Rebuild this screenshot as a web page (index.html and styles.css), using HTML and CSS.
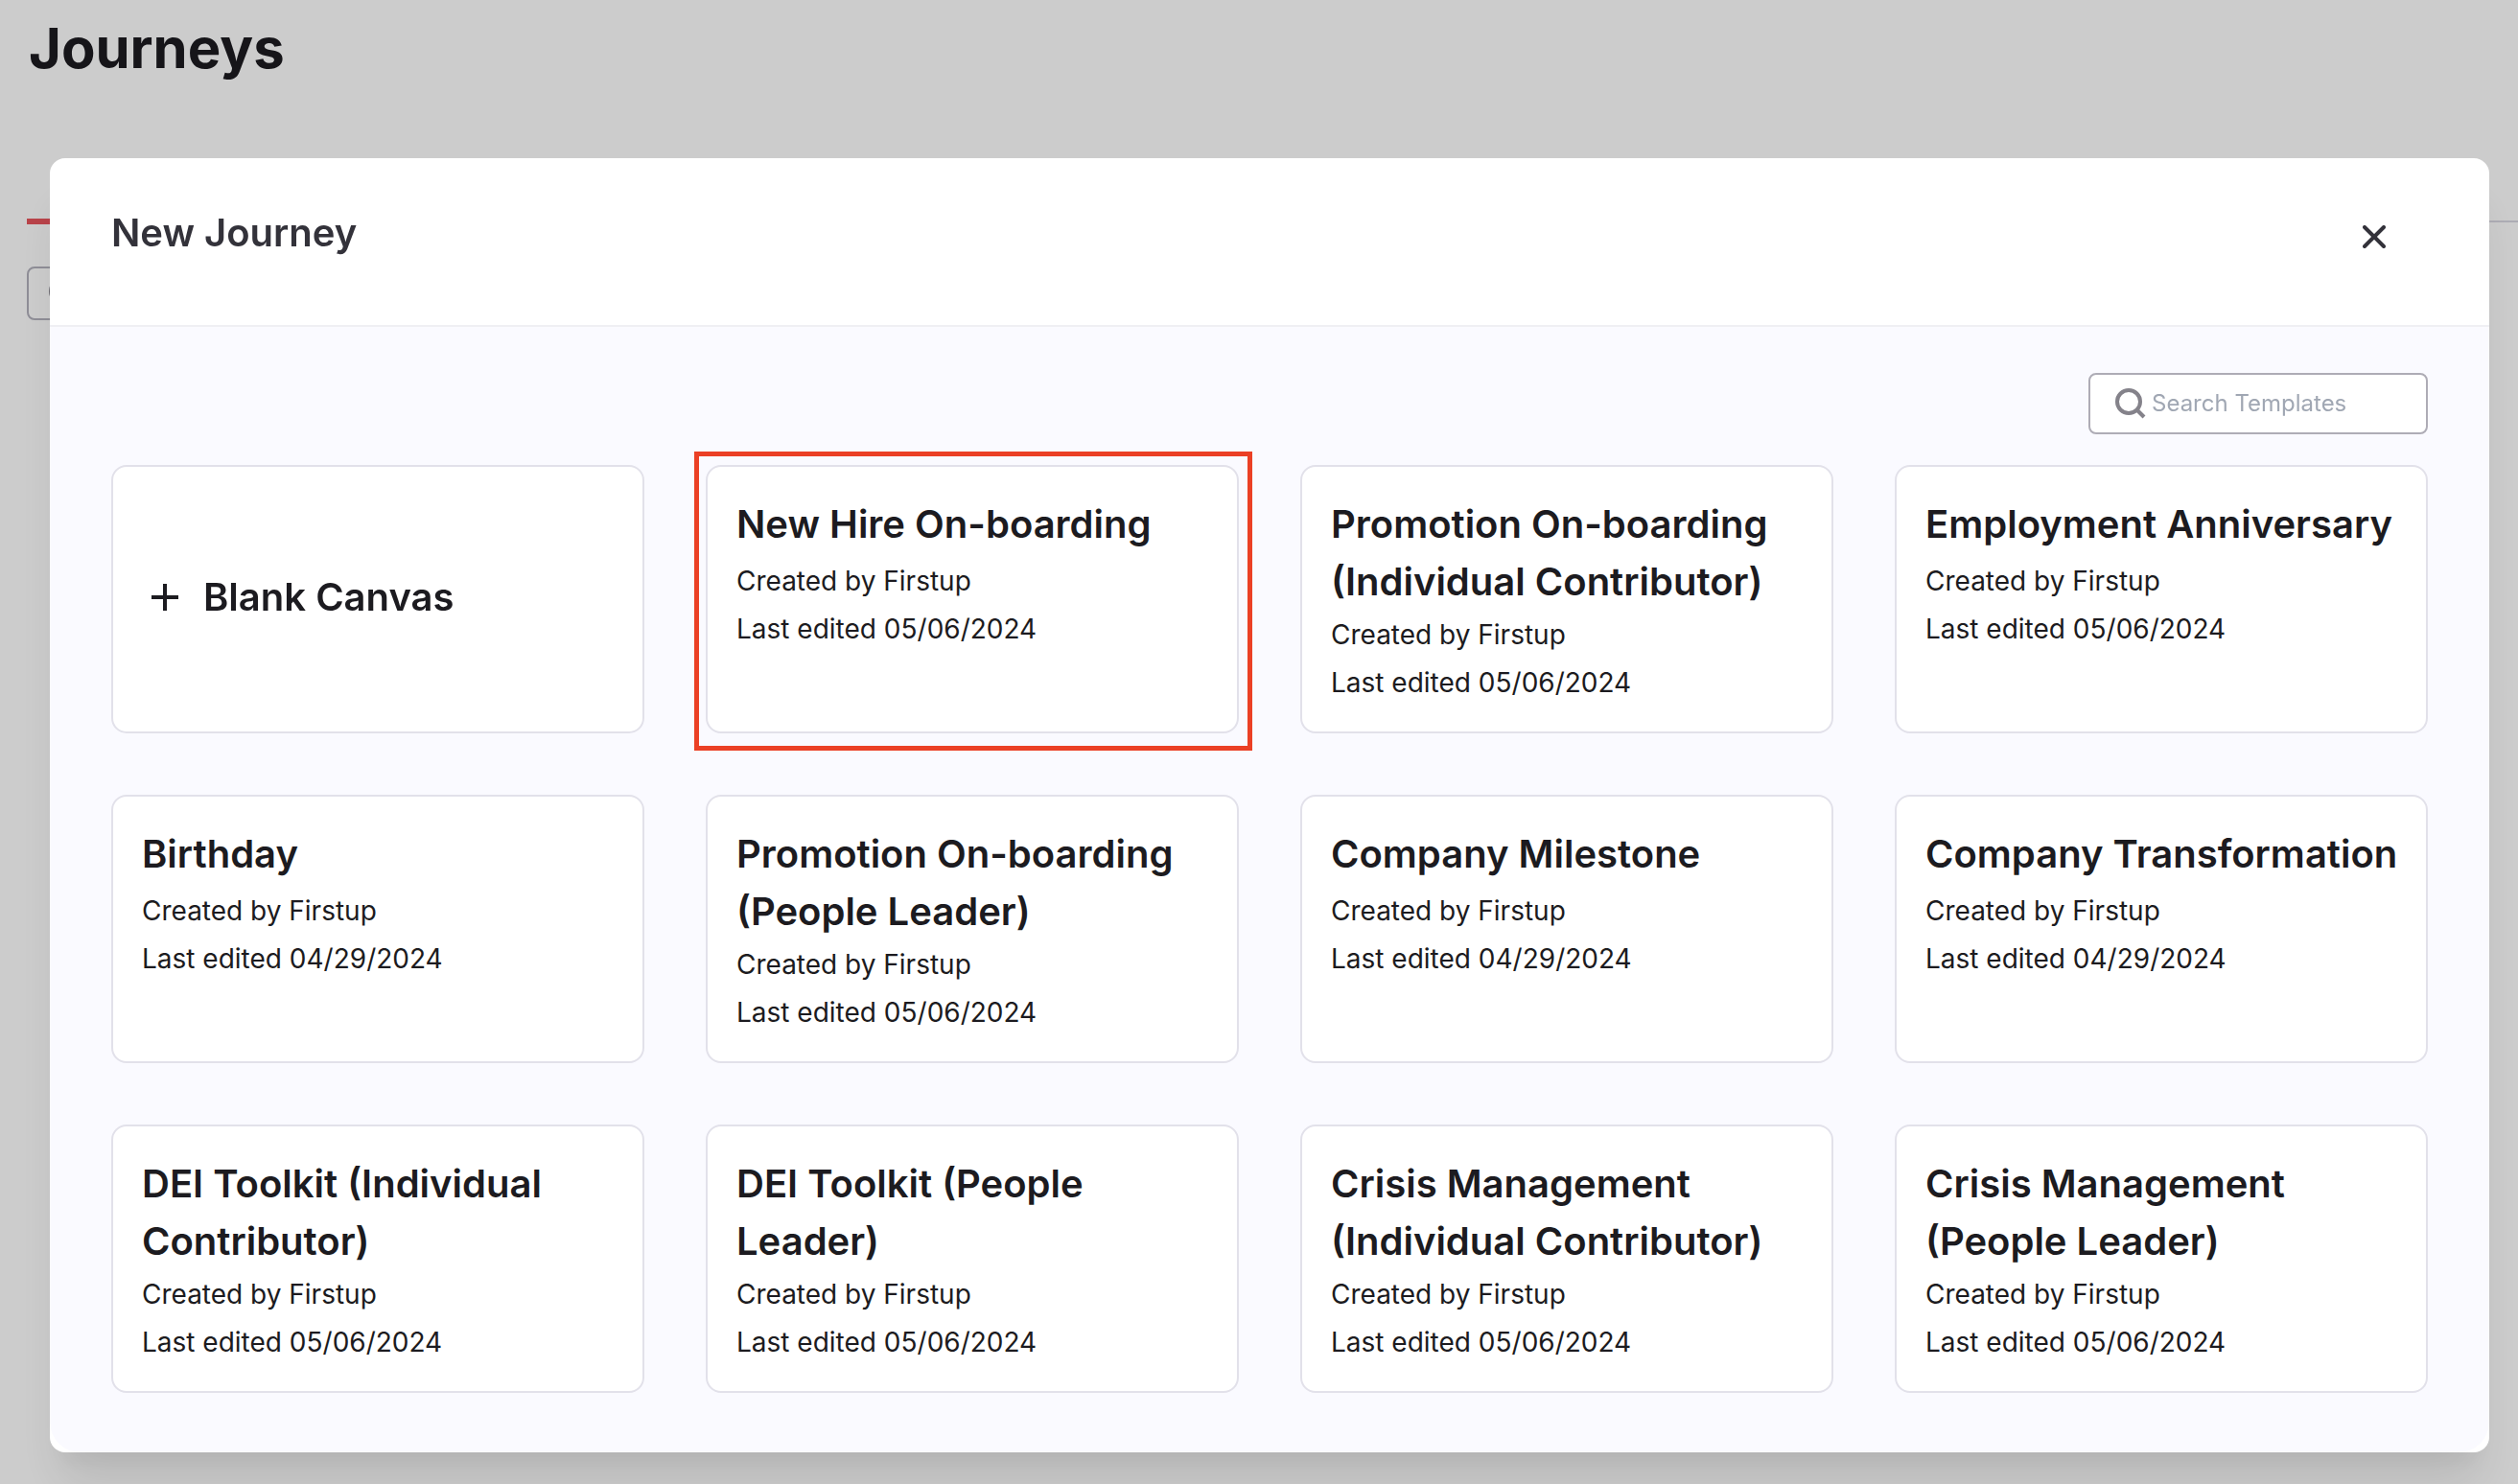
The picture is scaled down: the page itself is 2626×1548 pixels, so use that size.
FILE: index.html
```html
<!DOCTYPE html>
<html lang="en">
<head>
<meta charset="utf-8">
<meta name="viewport" content="width=device-width, initial-scale=1">
<title>Journeys</title>
<link rel="stylesheet" href="styles.css">
</head>
<body>
<main class="page">
  <h1 class="page-title">Journeys</h1>
  <div class="tabs"><span class="tab-active"></span></div>
  <div class="page-search">
    <svg class="search-icon" viewBox="0 0 32 32" aria-hidden="true"><circle cx="14" cy="14" r="12"/><path d="M22 22l8 8"/></svg>
    <input class="page-search-input" type="text" aria-label="Search journeys">
  </div>
</main>

<div class="backdrop">
  <section class="modal" role="dialog" aria-modal="true" aria-labelledby="modal-title">
    <header class="modal-header">
      <h2 class="modal-title" id="modal-title">New Journey</h2>
      <button class="close" type="button" aria-label="Close">
        <svg class="close-icon" viewBox="0 0 24 24" aria-hidden="true"><path d="M2 2l20 20M22 2L2 22"/></svg>
      </button>
    </header>
    <div class="modal-body">
      <label class="search">
        <svg class="search-icon" viewBox="0 0 32 32" aria-hidden="true"><circle cx="14" cy="14" r="12"/><path d="M22 22l8 8"/></svg>
        <input class="search-input" type="text" placeholder="Search Templates" aria-label="Search Templates">
      </label>
      <ul class="grid">
        <li class="cell"><button class="card card-blank" type="button">
          <svg class="plus-icon" viewBox="0 0 28 28" aria-hidden="true"><path d="M14 0v28M0 14h28"/></svg>
          <span class="card-title">Blank Canvas</span>
        </button></li>
        <li class="cell cell-marked"><button class="card" type="button">
          <span class="card-title">New Hire On-boarding</span>
          <span class="card-meta">Created by Firstup</span>
          <span class="card-meta">Last edited 05/06/2024</span>
        </button></li>
        <li class="cell"><button class="card" type="button">
          <span class="card-title">Promotion On-boarding (Individual Contributor)</span>
          <span class="card-meta">Created by Firstup</span>
          <span class="card-meta">Last edited 05/06/2024</span>
        </button></li>
        <li class="cell"><button class="card" type="button">
          <span class="card-title">Employment Anniversary</span>
          <span class="card-meta">Created by Firstup</span>
          <span class="card-meta">Last edited 05/06/2024</span>
        </button></li>
        <li class="cell"><button class="card" type="button">
          <span class="card-title">Birthday</span>
          <span class="card-meta">Created by Firstup</span>
          <span class="card-meta">Last edited 04/29/2024</span>
        </button></li>
        <li class="cell"><button class="card" type="button">
          <span class="card-title">Promotion On-boarding (People Leader)</span>
          <span class="card-meta">Created by Firstup</span>
          <span class="card-meta">Last edited 05/06/2024</span>
        </button></li>
        <li class="cell"><button class="card" type="button">
          <span class="card-title">Company Milestone</span>
          <span class="card-meta">Created by Firstup</span>
          <span class="card-meta">Last edited 04/29/2024</span>
        </button></li>
        <li class="cell"><button class="card" type="button">
          <span class="card-title">Company Transformation</span>
          <span class="card-meta">Created by Firstup</span>
          <span class="card-meta">Last edited 04/29/2024</span>
        </button></li>
        <li class="cell"><button class="card" type="button">
          <span class="card-title">DEI Toolkit (Individual Contributor)</span>
          <span class="card-meta">Created by Firstup</span>
          <span class="card-meta">Last edited 05/06/2024</span>
        </button></li>
        <li class="cell"><button class="card" type="button">
          <span class="card-title">DEI Toolkit (People Leader)</span>
          <span class="card-meta">Created by Firstup</span>
          <span class="card-meta">Last edited 05/06/2024</span>
        </button></li>
        <li class="cell"><button class="card" type="button">
          <span class="card-title">Crisis Management (Individual Contributor)</span>
          <span class="card-meta">Created by Firstup</span>
          <span class="card-meta">Last edited 05/06/2024</span>
        </button></li>
        <li class="cell"><button class="card" type="button">
          <span class="card-title">Crisis Management (People Leader)</span>
          <span class="card-meta">Created by Firstup</span>
          <span class="card-meta">Last edited 05/06/2024</span>
        </button></li>
      </ul>
    </div>
  </section>
</div>
</body>
</html>
```
FILE: styles.css
```css
*,
*::before,
*::after {
  box-sizing: border-box;
}

body {
  margin: 0;
  background: #fff;
  color: #1c1b20;
  font-family: Inter, "Liberation Sans", sans-serif;
  font-optical-sizing: none;
}

button,
input {
  font: inherit;
  color: inherit;
}

svg {
  fill: none;
  stroke: currentColor;
  flex: none;
}

/* Page behind the dialog */
.page {
  padding: 12px 0 0 28px;
}

.page-title {
  margin: 0;
  padding-left: 2px;
  font-size: 58px;
  line-height: 76px;
  font-weight: 700;
}

.tabs {
  display: flex;
  align-items: center;
  height: 6px;
  margin-top: 140px;
  background: linear-gradient(#d9d8e2, #d9d8e2) center / 100% 2px no-repeat;
}

.tab-active {
  width: 160px;
  height: 6px;
  background: #e7545c;
}

.page-search {
  display: flex;
  align-items: center;
  gap: 8px;
  width: 354px;
  height: 56px;
  margin-top: 44px;
  padding: 0 21px;
  border: 2px solid #b3b2bd;
  border-radius: 8px;
  color: #a09ea8;
}

.page-search-input {
  flex: 1;
  min-width: 0;
  padding: 0;
  border: 0;
  background: none;
}

/* Dialog */
.backdrop {
  position: fixed;
  inset: 0;
  overflow: auto;
  padding: 165px 30px 32px 52px;
  background: rgba(0, 0, 0, 0.2);
}

.modal {
  border-radius: 16px;
  background: #fff;
  box-shadow: 0 40px 50px -10px rgba(0, 0, 0, 0.1),
    0 20px 20px -10px rgba(0, 0, 0, 0.04);
}

.modal-header {
  display: flex;
  align-items: flex-start;
  justify-content: space-between;
  padding: 48px 100px 66px 64px;
  border-bottom: 2px solid #efeff3;
}

.modal-title {
  margin: 0;
  font-size: 40px;
  line-height: 60px;
  font-weight: 600;
  color: #33323a;
}

.close {
  display: flex;
  align-items: center;
  justify-content: center;
  width: 40px;
  height: 40px;
  margin-top: 14px;
  padding: 0;
  border: 0;
  background: none;
  color: #33323a;
  cursor: pointer;
}

.close-icon {
  width: 24px;
  height: 24px;
  stroke-width: 4;
  stroke-linecap: round;
}

.modal-body {
  display: flex;
  flex-direction: column;
  gap: 32px;
  padding: 48px 64px 62px;
  border-radius: 0 0 32px 32px;
  background: #fafaff;
}

.search {
  display: flex;
  align-items: center;
  align-self: flex-end;
  gap: 6px;
  width: 354px;
  height: 64px;
  padding: 0 26px;
  border: 2px solid #aeacb6;
  border-radius: 8px;
  background: #fff;
}

.search-icon {
  width: 32px;
  height: 32px;
  stroke-width: 4;
  color: #84828a;
}

.search-input {
  flex: 1;
  min-width: 0;
  padding: 0;
  border: 0;
  outline: 0;
  background: none;
  font-size: 24px;
  line-height: 36px;
}

.search-input::placeholder {
  color: #a0a7b3;
  opacity: 1;
}

.grid {
  display: grid;
  grid-template-columns: repeat(4, minmax(0, 1fr));
  gap: 64px;
  margin: 0;
  padding: 0;
  list-style: none;
}

.cell {
  display: flex;
  position: relative;
}

.cell-marked::after {
  content: "";
  position: absolute;
  inset: -14px -14px -18px -12px;
  border: 5px solid #eb4025;
  pointer-events: none;
}

.card {
  display: flex;
  flex-direction: column;
  justify-content: flex-start;
  flex: 1;
  min-width: 0;
  min-height: 280px;
  padding: 30px 24px 24px 30px;
  border: 2px solid #e2e1ea;
  border-radius: 16px;
  background: #fff;
  text-align: left;
  cursor: pointer;
}

.card-title {
  min-height: 64px;
  font-size: 40px;
  line-height: 60px;
  font-weight: 600;
}

.card-meta {
  font-size: 28px;
  line-height: 50px;
}

.card-blank {
  flex-direction: row;
  align-items: center;
  gap: 26px;
  padding: 0 40px 4px;
}

.card-blank .card-title {
  min-height: 0;
}

.plus-icon {
  width: 28px;
  height: 28px;
  stroke-width: 4;
}
```
